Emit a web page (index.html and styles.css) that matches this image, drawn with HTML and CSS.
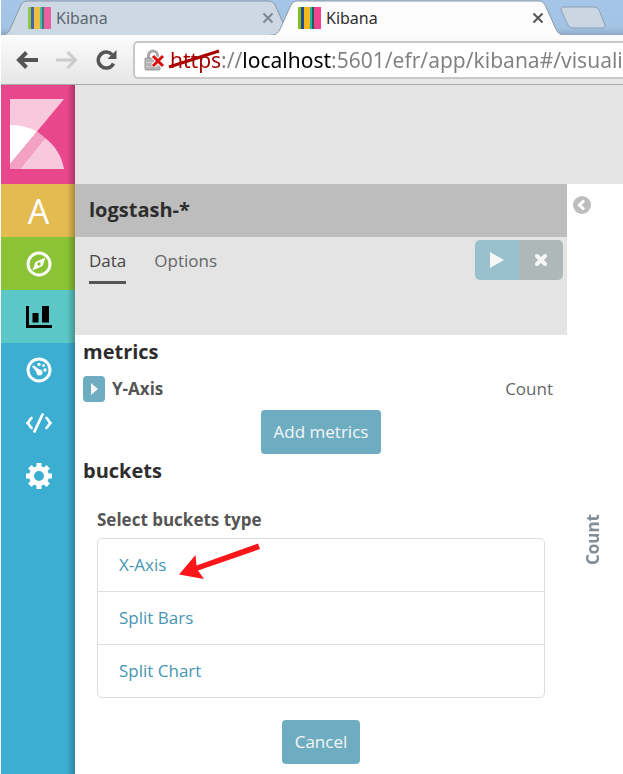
FILE: index.html
```html
<!DOCTYPE html>
<html lang="en">
<head>
    <meta charset="UTF-8">
    <meta name="viewport" content="width=device-width, initial-scale=1">
    <title>Kibana</title>
    <link rel="stylesheet" href="styles.css">
</head>
<body>
<div class="browser">
    <div class="tabs">
        <div class="tab inactive">
            <svg class="tab-shape" viewBox="0 0 294 35" preserveAspectRatio="none"><path d="M0 35C6 35 8 32 10 27L19 7C21 2 23 1 28 1H266C271 1 273 2 275 7L284 27C286 32 288 35 294 35"/></svg>
            <span class="favicon"></span>
            <span class="tab-title">Kibana</span>
            <button class="tab-close" aria-label="Close tab"><svg width="12" height="12" viewBox="0 0 12 12"><path d="M1.500 1.500l9 9M10.500 1.500l-9 9"/></svg></button>
        </div>
        <div class="tab active">
            <svg class="tab-shape" viewBox="0 0 294 35" preserveAspectRatio="none"><path d="M0 35C6 35 8 32 10 27L19 7C21 2 23 1 28 1H266C271 1 273 2 275 7L284 27C286 32 288 35 294 35"/></svg>
            <span class="favicon"></span>
            <span class="tab-title">Kibana</span>
            <button class="tab-close" aria-label="Close tab"><svg width="12" height="12" viewBox="0 0 12 12"><path d="M1.500 1.500l9 9M10.500 1.500l-9 9"/></svg></button>
        </div>
        <button class="new-tab" aria-label="New tab">
            <svg width="46" height="24" viewBox="0 0 46 24"><path d="M5 1H33C37 1 38 2 39.500 5L44.500 18C45.500 21 45 22 42 22H14C10 22 9 21 7.500 18L1.500 5C.500 2 1.500 1 5 1Z"/></svg>
        </button>
    </div>
    <div class="toolbar">
        <button class="nav-button" aria-label="Back"><svg width="24" height="22" viewBox="0 0 24 22"><path d="M23 11H4M11.500 3.500L4 11l7.500 7.500" fill="none" stroke="#555" stroke-width="4"/></svg></button>
        <button class="nav-button" aria-label="Forward"><svg width="24" height="22" viewBox="0 0 24 22"><path d="M1 11H20M12.500 3L20.500 11l-8 8" fill="none" stroke="#ccc" stroke-width="3"/></svg></button>
        <button class="nav-button" aria-label="Reload"><svg width="24" height="22" viewBox="0 0 24 22"><path d="M18.500 14.500A8 8 0 1 1 17 5.500" fill="none" stroke="#555" stroke-width="3.500"/><path d="M21.500 1V10H12.500Z" fill="#555"/></svg></button>
        <div class="address">
            <svg class="lock" width="22" height="22" viewBox="0 0 22 22">
                <path d="M4.500 10V6.500a4.500 4.500 0 0 1 9 0V10" fill="none" stroke="#aaa" stroke-width="3"/>
                <rect x="1" y="9" width="15" height="12" rx="1" fill="#b4b4b4" stroke="#999"/>
                <path d="M2 13.500h13M2 17.500h13" stroke="#ccc"/>
                <path d="M9 7l10 10M19 7L9 17" stroke="#fff" stroke-width="5"/>
                <path d="M9 7l10 10M19 7L9 17" stroke="#d81010" stroke-width="3"/>
            </svg>
            <input class="url" type="text" aria-label="Address" value="https://localhost:5601/efr/app/kibana#/visualize" spellcheck="false">
            <svg class="strike" width="52" height="20" viewBox="0 0 52 20"><path d="M1 18L51 2" stroke="#a80000" stroke-width="3"/></svg>
        </div>
    </div>
</div>

<div class="app">
    <nav class="sidebar">
        <a class="logo" href="#" aria-label="Kibana">
            <svg width="54" height="70" viewBox="0 0 54 70">
                <path d="M0 0H54L0 65Z" fill="#f8c8dc"/>
                <path d="M0 26A54 54 0 0 1 27 32.500L0 65Z" fill="#fff"/>
                <path d="M27 32.500A54 54 0 0 1 35 39L10 70H0V65Z" fill="#f4a2c4"/>
                <path d="M35 39A50 50 0 0 1 54 70H10Z" fill="#f8c8dc"/>
            </svg>
        </a>
        <a class="nav-item apps" href="#">A</a>
        <a class="nav-item discover" href="#" aria-label="Discover">
            <svg width="26" height="26" viewBox="0 0 26 26"><circle cx="13" cy="13" r="11" fill="none" stroke="#fff" stroke-width="3"/><path fill="#fff" fill-rule="evenodd" d="M19.500 6.500L16.500 15 6.500 19.500 9.500 11ZM13 11.300a1.700 1.700 0 1 0 0 3.400 1.700 1.700 0 0 0 0-3.400Z"/></svg>
        </a>
        <a class="nav-item visualize" href="#" aria-label="Visualize">
            <svg width="26" height="24" viewBox="0 0 26 24"><path d="M0 1h3v19h23v3H0ZM6.500 8H12.500V17.500H6.500ZM16 1h7V17.500h-7Z"/></svg>
        </a>
        <a class="nav-item" href="#" aria-label="Dashboard">
            <svg width="26" height="26" viewBox="0 0 26 26"><circle cx="13" cy="13" r="11" fill="none" stroke="#fff" stroke-width="3"/><g fill="#fff"><circle cx="13" cy="7.500" r="1.700"/><circle cx="17.500" cy="8.500" r="1.500"/><circle cx="19" cy="13" r="1.700"/><circle cx="13.500" cy="15.500" r="3"/><path d="M6 9.500Q6.500 8 8.500 9L16 14.500 13 18Z"/></g></svg>
        </a>
        <a class="nav-item" href="#" aria-label="Dev Tools">
            <svg width="26" height="20" viewBox="0 0 26 20"><path d="M6.500 4.500C3.500 5.500 4 8 1.500 10 4 12 3.500 14.500 6.500 15.500M19.500 4.500C22.500 5.500 22 8 24.500 10 22 12 22.500 14.500 19.500 15.500M17 .500L8 19.500" fill="none" stroke="#fff" stroke-width="2.700"/></svg>
        </a>
        <a class="nav-item" href="#" aria-label="Management">
            <svg width="26" height="26" viewBox="0 0 26 26"><g fill="none" stroke="#fff"><path d="M13 0V5M13 21V26M0 13H5M21 13H26M3.800 3.800l3.500 3.500M18.700 18.700l3.500 3.500M3.800 22.200l3.500-3.500M18.700 7.300l3.500-3.500" stroke-width="5"/><circle cx="13" cy="13" r="7.500" stroke-width="5"/></g></svg>
        </a>
    </nav>

    <header class="topbar"></header>

    <main class="editor">
        <h1 class="index-pattern">logstash-*</h1>
        <div class="editor-nav">
            <a class="editor-tab selected" href="#">Data</a>
            <a class="editor-tab" href="#">Options</a>
            <div class="actions">
                <button class="apply" aria-label="Apply changes"><svg width="14" height="16" viewBox="0 0 14 16"><path d="M0 0L14 8 0 16Z" fill="#f6f6f6"/></svg></button>
                <button class="discard" aria-label="Discard changes"><svg width="14" height="14" viewBox="0 0 14 14"><path d="M3 3l8 8M11 3l-8 8" stroke="#f6f6f6" stroke-width="4" stroke-linecap="round"/></svg></button>
            </div>
        </div>

        <section class="group">
            <h2>metrics</h2>
            <div class="metric">
                <button class="toggle" aria-label="Expand Y-Axis"><svg width="7" height="12" viewBox="0 0 7 12"><path d="M0 0L7 6 0 12Z" fill="#f6f6f6"/></svg></button>
                <span class="metric-name">Y-Axis</span>
                <span class="metric-type">Count</span>
            </div>
            <button class="btn">Add metrics</button>
        </section>

        <section class="group">
            <h2>buckets</h2>
            <div class="bucket-form">
                <h3>Select buckets type</h3>
                <ul class="bucket-types">
                    <li>
                        <a href="#">X-Axis</a>
                        <svg class="arrow" width="84" height="40" viewBox="0 0 84 40"><path d="M1 32.500L17.500 13 18.500 23.500 80 1.500 82 7 20 28.500 26 37Z" fill="#fc1519"/></svg>
                    </li>
                    <li><a href="#">Split Bars</a></li>
                    <li><a href="#">Split Chart</a></li>
                </ul>
            </div>
            <button class="btn">Cancel</button>
        </section>
    </main>

    <aside class="chart">
        <button class="collapse" aria-label="Collapse editor"><svg width="18" height="18" viewBox="0 0 18 18"><circle cx="9" cy="9" r="9" fill="#bdbdbd"/><path d="M11 4.500L6.500 9l4.500 4.500" fill="none" stroke="#fff" stroke-width="3"/></svg></button>
        <span class="axis-label">Count</span>
    </aside>
</div>
</body>
</html>
```
FILE: styles.css
```css
* { box-sizing: border-box; }

body {
    margin: 0;
    padding-left: 1px;
    min-height: 100vh;
    display: flex;
    flex-direction: column;
    background: #fff;
    color: #2d2d2d;
    font-family: 'Open Sans', sans-serif;
    font-size: 17px;
    line-height: 24px;
    overflow-x: hidden;
}

h1, h2, h3, ul { margin: 0; padding: 0; }
a { text-decoration: none; }
svg { display: block; }

button {
    border: none;
    padding: 0;
    background: none;
    font: inherit;
    cursor: pointer;
    display: flex;
    align-items: center;
    justify-content: center;
}

/* browser window */
.tabs {
    display: flex;
    height: 35px;
    background: linear-gradient(#a5c6e8, #a3c3e4 80%, #8ea9c6);
    overflow: hidden;
}

.tab {
    position: relative;
    flex: 0 1 294px;
    display: flex;
    align-items: center;
    padding: 0 21px 0 27px;
    font-family: 'Noto Sans', sans-serif;
    font-size: 16px;
}

.tab + .tab { margin-left: -24px; }
.active { z-index: 1; }

.tab-shape {
    position: absolute;
    top: 0;
    left: 0;
    width: 100%;
    height: 35px;
    fill: #fcfcfc;
    stroke: #8b97a5;
}

.inactive .tab-shape { fill: #cdd8e5; }
.inactive .tab-title { color: #5d656e; }
.inactive .favicon { opacity: 0.8; }

.favicon, .tab-title, .tab-close { position: relative; }

.favicon {
    width: 23px;
    height: 22px;
    margin-right: 5px;
    background: linear-gradient(to right, #7fc31c 3px, #24489b 3px 6px, #f3b71b 6px 12px, #1cb5b0 12px 14px, #205e58 14px 16px, #ee4490 16px);
}

.tab-title { flex: 1; }

.tab-close svg {
    stroke: #555;
    stroke-width: 2;
}

.inactive .tab-close svg { stroke: #7d8690; }

.new-tab { margin: 0 0 0 -5px; }

.new-tab path {
    fill: #cbd6e3;
    stroke: #8c9fb5;
}

.toolbar {
    display: flex;
    align-items: center;
    gap: 16px;
    height: 50px;
    padding-left: 14px;
    background: linear-gradient(#fcfcfc, #e6e6e6);
    border-bottom: 1px solid #aaa;
}

.address {
    position: relative;
    flex: 1;
    min-width: 0;
    height: 38px;
    margin-left: -2px;
    padding-left: 9px;
    display: flex;
    align-items: center;
    gap: 4px;
    background: #fff;
    border: 2px solid #c8c8c8;
    border-right: none;
    border-radius: 5px 0 0 5px;
}

.lock { flex: none; }

/* scheme, host and path each get their own colour */
.url {
    flex: 1;
    min-width: 0;
    border: none;
    padding: 0;
    font-family: 'Noto Sans', sans-serif;
    font-size: 21px;
    line-height: 30px;
    background: linear-gradient(to right, #a80000 51px, #808080 51px 72px, #000 72px 161px, #808080 161px);
    -webkit-background-clip: text;
    background-clip: text;
    color: transparent;
}

.strike {
    position: absolute;
    left: 33px;
    top: 6px;
}

/* kibana */
.app {
    flex: 1;
    display: grid;
    grid-template-columns: 74px minmax(0, 492px) minmax(56px, 1fr);
    grid-template-rows: 99px 1fr;
}

.sidebar {
    grid-row: 1 / 3;
    position: relative;
    background: #3caed2;
}

.sidebar::after {
    content: '';
    position: absolute;
    top: 0;
    right: 0;
    bottom: 0;
    width: 8px;
    background: linear-gradient(to right, transparent, rgba(0, 0, 0, 0.25));
}

.logo {
    display: block;
    height: 99px;
    padding: 14px 9px;
    background: #e8488b;
}

.nav-item {
    display: flex;
    align-items: center;
    justify-content: center;
    height: 53px;
    padding-left: 1px;
    color: #fff;
    font-size: 34px;
}

.apps { background: #e3bb50; }
.discover { background: #8ac336; }
.visualize { background: #5bc7c6; }

.topbar {
    grid-column: 2 / 4;
    background: #e4e4e4;
}

.index-pattern {
    height: 53px;
    padding-left: 14px;
    background: #bdbdbd;
    font-size: 20px;
    font-weight: 700;
    line-height: 52px;
}

.editor-nav {
    display: flex;
    align-items: flex-start;
    gap: 28px;
    height: 98px;
    padding: 3px 4px 0 14px;
    background: #e4e4e4;
}

.editor-tab {
    padding: 9px 0 8px;
    color: #666;
}

.selected {
    color: #444;
    border-bottom: 3px solid #555;
}

.actions {
    display: flex;
    margin-left: auto;
    border-radius: 5px;
    overflow: hidden;
}

.apply, .discard {
    width: 44px;
    height: 40px;
}

.apply { background: #98c0cd; }
.discard { background: #afb8b9; }

.group { padding: 4px 8px 0; }

h2 {
    font-size: 20px;
    font-weight: 700;
    line-height: 26px;
}

.metric {
    display: flex;
    align-items: center;
    margin: 11px 6px 8px 0;
}

.toggle {
    width: 22px;
    height: 26px;
    margin-right: 7px;
    background: #6eadc1;
    border-radius: 4px;
}

.metric-name {
    color: #555;
    font-weight: 700;
}

.metric-type {
    margin-left: auto;
    color: #666;
}

.btn {
    margin: 0 auto;
    padding: 10px 13px;
    background: #6eadc1;
    border-radius: 4px;
    color: #f6f6f6;
}

.bucket-form {
    margin: 24px 14px 22px;
}

h3 {
    margin-bottom: 6px;
    color: #555;
    font-size: 17px;
    font-weight: 700;
}

.bucket-types {
    list-style: none;
    border: 1px solid #ddd;
    border-radius: 5px;
}

.bucket-types li {
    position: relative;
    padding: 14px 21px;
}

.bucket-types li + li { border-top: 1px solid #ddd; }
.bucket-types a { color: #4596b3; }

.arrow {
    position: absolute;
    left: 80px;
    top: 3px;
}

.chart {
    display: flex;
    flex-direction: column;
    align-items: flex-start;
    padding: 12px 6px;
}

.axis-label {
    margin: 300px 0 0 8px;
    color: #848e96;
    font-weight: 700;
    writing-mode: vertical-rl;
    transform: rotate(180deg);
}
```
